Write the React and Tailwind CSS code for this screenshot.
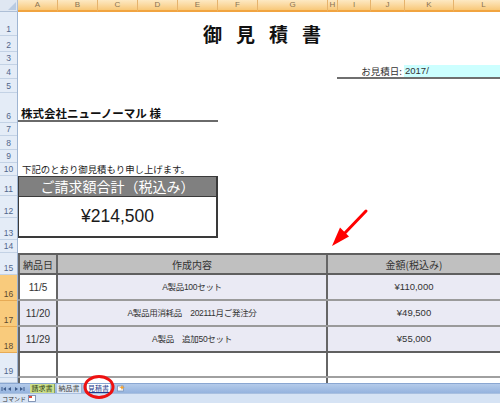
import React from 'react';

const cols = [
  { l: 'A', w: 'w-[40px]' },
  { l: 'B', w: 'w-[40px]' },
  { l: 'C', w: 'w-[40px]' },
  { l: 'D', w: 'w-[40px]' },
  { l: 'E', w: 'w-[40px]' },
  { l: 'F', w: 'w-[40px]' },
  { l: 'G', w: 'w-[70px]' },
  { l: 'H', w: 'w-[10px]' },
  { l: 'I', w: 'w-[33px]' },
  { l: 'J', w: 'w-[34px]' },
  { l: 'K', w: 'w-[49px]' },
  { l: 'L', w: 'w-[60px]' },
];

const rows = [
  { n: 1, h: 'h-[24px]' },
  { n: 2, h: 'h-[16px]' },
  { n: 3, h: 'h-[13px]' },
  { n: 4, h: 'h-[14px]' },
  { n: 5, h: 'h-[14px]' },
  { n: 6, h: 'h-[30px]' },
  { n: 7, h: 'h-[13px]' },
  { n: 8, h: 'h-[14px]' },
  { n: 9, h: 'h-[13px]' },
  { n: 10, h: 'h-[13px]' },
  { n: 11, h: 'h-[20px]' },
  { n: 12, h: 'h-[22px]' },
  { n: 13, h: 'h-[22px]' },
  { n: 14, h: 'h-[13px]' },
  { n: 15, h: 'h-[22px]' },
  { n: 16, h: 'h-[26px]', sel: true },
  { n: 17, h: 'h-[26px]', sel: true },
  { n: 18, h: 'h-[26px]', sel: true },
  { n: 19, h: 'h-[25px]' },
  { n: 20, h: 'h-[5px]', hide: true },
];

const data = [
  { d: '11/5', item: 'A製品100セット', amt: '¥110,000', white: true },
  { d: '11/20', item: 'A製品用消耗品\u3000202111月ご発注分', amt: '¥49,500' },
  { d: '11/29', item: 'A製品\u3000追加50セット', amt: '¥55,000' },
];

function NavArrows() {
  return (
    <svg width="27" height="10" viewBox="0 0 27 10" className="shrink-0">
      <g fill="#3f5d8c">
        <rect x="1.5" y="3" width="1" height="4" />
        <path d="M6 3 L3 5 L6 7 Z" />
        <path d="M11 3 L8 5 L11 7 Z" />
        <path d="M15 3 L18 5 L15 7 Z" />
        <path d="M20 3 L23 5 L20 7 Z" />
        <rect x="23.5" y="3" width="1" height="4" />
      </g>
    </svg>
  );
}

export default function App() {
  return (
    <div className="relative w-[500px] h-[403px] overflow-hidden bg-white font-['Liberation_Sans','Noto_Sans_CJK_JP',sans-serif] text-[#222]">
      {/* Column header */}
      <div className="flex h-[12px]">
        <div className="relative w-[18px] shrink-0 bg-[#dfe7f2] border-r border-b border-[#aebfd6]">
          <div className="absolute right-[1px] bottom-[1px] w-0 h-0 border-l-[8px] border-l-transparent border-b-[8px] border-b-[#b9cbe2]" />
        </div>
        {cols.map((c) => (
          <div
            key={c.l}
            className={`${c.w} shrink-0 flex items-end justify-center text-[8px] leading-[10px] text-[#8a7352] bg-gradient-to-b from-[#fde9c3] to-[#f8c878] border-r border-[#e6b36c] border-b-2 border-b-[#f1a440]`}
          >
            {c.l}
          </div>
        ))}
      </div>

      {/* Body */}
      <div className="flex h-[371px] overflow-hidden">
        {/* Row headers */}
        <div className="w-[18px] shrink-0 flex flex-col border-r border-[#9fb5d2]">
          {rows.map((r) => (
            <div
              key={r.n}
              className={`${r.h} shrink-0 flex items-end justify-center text-[8.5px] leading-[10px] pb-[1px] border-b overflow-hidden ${
                r.sel
                  ? 'bg-[#f9cb7c] border-[#e7ab55] text-[#5b4a30]'
                  : 'bg-[#e4ecf7] border-[#c3d2e5] text-[#51678c]'
              }`}
            >
              {r.hide ? '' : r.n}
            </div>
          ))}
        </div>

        {/* Sheet content */}
        <div className="flex-1 flex flex-col">
          {/* Rows 1-2: title */}
          <div className="h-[40px] flex items-center pt-[4px] pl-[185px]">
            <span className="font-['Noto_Sans_CJK_JP',sans-serif] font-bold text-[19px] leading-[22px] tracking-[14px] text-[#111]">
              御見積書
            </span>
          </div>
          {/* Row 3 */}
          <div className="h-[13px]" />
          {/* Row 4: date */}
          <div className="h-[14px] flex">
            <div className="w-[319px] shrink-0" />
            <div className="flex-1 flex border-b-2 border-[#6f6f6f]">
              <div className="w-[67px] shrink-0 text-right text-[9.5px] leading-[12px] pr-[2px] text-[#333] font-['Noto_Sans_CJK_JP',sans-serif]">
                お見積日:
              </div>
              <div className="flex-1 bg-[#ccffff] text-[9.5px] leading-[12px] pl-[1px] text-[#333]">2017/</div>
            </div>
          </div>
          {/* Row 5 */}
          <div className="h-[14px]" />
          {/* Row 6: company */}
          <div className="h-[30px] flex items-end pb-[1px]">
            <div className="w-[200px] border-b-2 border-[#6a6a6a] pl-[3px] text-[11.5px] leading-[13px] font-bold text-[#111] font-['Noto_Sans_CJK_JP',sans-serif]">
              株式会社ニューノーマル 様
            </div>
          </div>
          {/* Rows 7-9 */}
          <div className="h-[40px]" />
          {/* Row 10 */}
          <div className="h-[13px] pl-[4px] text-[9.4px] leading-[13px] text-[#222] font-['Noto_Sans_CJK_JP',sans-serif]">
            下記のとおり御見積もり申し上げます。
          </div>
          {/* Rows 11-13: total box */}
          <div className="h-[64px]">
            <div className="w-[200px] h-[62px] flex flex-col border border-[#3a3a3a] border-r-2 border-b-2">
              <div className="h-[19px] shrink-0 bg-[#808080] text-white text-[14px] leading-[19px] text-center font-['Noto_Sans_CJK_JP',sans-serif]">
                ご請求額合計（税込み）
              </div>
              <div className="flex-1 flex items-center justify-center text-[17.5px] text-[#1a1a1a] border-t border-[#3a3a3a]">
                ¥214,500
              </div>
            </div>
          </div>
          {/* Row 14 */}
          <div className="h-[13px]" />
          {/* Row 15: table header */}
          <div className="h-[22px] flex bg-[#c0c0c0] border-t-2 border-b-2 border-[#5f5f5f] text-[10px] text-[#333] font-['Noto_Sans_CJK_JP',sans-serif]">
            <div className="w-[40px] shrink-0 border-l-2 border-r-2 border-[#666] flex items-center justify-center">納品日</div>
            <div className="w-[270px] shrink-0 border-r-2 border-[#666] flex items-center justify-center">作成内容</div>
            <div className="flex-1 flex items-center justify-center">金額(税込み)</div>
          </div>
          {/* Rows 16-18 */}
          {data.map((r, i) => (
            <div
              key={r.d}
              className={`h-[26px] flex bg-[#eaeaf4] text-[#333] border-b-2 ${i === 2 ? 'border-[#606060]' : 'border-[#9a9a9a]'}`}
            >
              <div
                className={`w-[40px] shrink-0 border-l-2 border-l-[#666] border-r-2 border-r-[#666] flex items-center justify-center text-[10px] ${
                  r.white ? 'bg-white' : ''
                }`}
              >
                {r.d}
              </div>
              <div className="w-[270px] shrink-0 border-r-2 border-[#666] flex items-center justify-center text-[8.5px] tracking-[-0.3px] font-['Liberation_Sans','Noto_Sans_CJK_JP',sans-serif]">
                {r.item}
              </div>
              <div className="flex-1 flex items-center justify-center text-[9.5px]">{r.amt}</div>
            </div>
          ))}
          {/* Row 19 */}
          <div className="h-[25px] flex border-b-2 border-[#a0a0a0]">
            <div className="w-[40px] shrink-0 border-l-2 border-l-[#666] border-r-2 border-r-[#666]" />
            <div className="w-[270px] shrink-0 border-r-2 border-[#666]" />
            <div className="flex-1" />
          </div>
          {/* Row 20 partial */}
          <div className="h-[5px] flex">
            <div className="w-[40px] shrink-0 border-l-2 border-l-[#666] border-r-2 border-r-[#666]" />
            <div className="w-[270px] shrink-0 border-r-2 border-[#666]" />
            <div className="flex-1" />
          </div>
        </div>
      </div>

      {/* Sheet tabs bar */}
      <div className="flex items-stretch h-[10px] bg-gradient-to-b from-[#b4cbea] to-[#95b3de] border-t border-[#8aa7d2] text-[7px] leading-[9px] font-['Noto_Sans_CJK_JP',sans-serif]">
        <NavArrows />
        <div className="flex items-stretch gap-[2px] pl-[3px]">
          <div className="w-[25px] bg-[#cde08c] text-center text-[#2b3a12] border-r border-[#8aa05a] whitespace-nowrap">請求書</div>
          <div className="w-[25px] bg-[#dfe9f5] text-center text-[#444] border-r border-[#9ab0cf] whitespace-nowrap">納品書</div>
          <div className="w-[23px] ml-[3px] bg-white text-center text-[#1e3c8c] underline whitespace-nowrap">見積書</div>
          <div className="w-[10px] ml-[4px] flex items-center justify-center">
            <svg width="8" height="7" viewBox="0 0 8 7">
              <rect x="0.5" y="1" width="6" height="5" fill="#fff" stroke="#7b93b8" strokeWidth="0.8" />
              <path d="M5 0 L6 2 L8 2.5 L6 3 L5 5 L4 3 L2 2.5 L4 2 Z" fill="#f0a030" />
            </svg>
          </div>
        </div>
      </div>

      {/* Status bar */}
      <div className="flex items-center h-[10px] bg-[#d6e3f4] border-t border-[#a9c0e0] text-[6px] leading-[9px] text-[#333] font-['Noto_Sans_CJK_JP',sans-serif]">
        <span className="pl-[2px] w-[28px] whitespace-nowrap">コマンド</span>
        <svg width="8" height="7" viewBox="0 0 8 7">
          <rect x="0.5" y="0.5" width="7" height="6" fill="#fff" stroke="#6b7fa6" strokeWidth="0.8" />
          <rect x="1" y="1" width="3" height="2" fill="#e04a3a" />
        </svg>
      </div>

      {/* Annotations */}
      <svg className="absolute left-0 top-0 pointer-events-none" width="500" height="403" viewBox="0 0 500 403">
        <line x1="366" y1="211" x2="343" y2="235" stroke="#ff0000" strokeWidth="3" strokeLinecap="round" />
        <polygon points="332,246 340,227.5 349,236.5" fill="#ff0000" />
        <ellipse cx="99" cy="387" rx="14" ry="10.5" fill="none" stroke="#ee1111" strokeWidth="3" />
      </svg>
    </div>
  );
}
